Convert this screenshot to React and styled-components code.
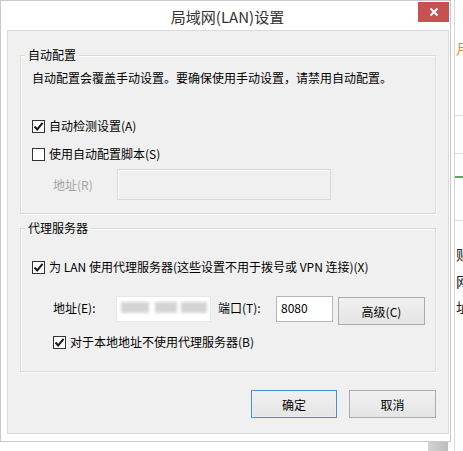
import React from "react";
import styled, { createGlobalStyle } from "styled-components";

const Global = createGlobalStyle`
  html, body { margin: 0; padding: 0; background: #ffffff; }
  body { font-family: "Noto Sans CJK SC", "Microsoft YaHei", sans-serif; font-size: 12px; color: #000; }
  * { box-sizing: border-box; }
`;

const Desktop = styled.div`
  display: flex;
  width: 463px;
  height: 451px;
  overflow: hidden;
  background: #fff;
`;

const LeftCol = styled.div`
  display: flex;
  flex-direction: column;
  width: 451px;
  flex: none;
`;

const Window = styled.div`
  width: 451px;
  height: 442px;
  background: #fff;
  border: 1px solid #c9c9c9;
  display: flex;
  flex-direction: column;
`;

const TitleBar = styled.div`
  position: relative;
  height: 29px;
  display: flex;
  align-items: center;
  justify-content: center;
  font-size: 15px;
  color: #333;
  padding-left: 4px;
  padding-top: 1px;
`;

const CloseBtn = styled.div`
  position: absolute;
  right: 1px;
  top: 1px;
  width: 31px;
  height: 20px;
  background: #c75050;
  display: flex;
  align-items: center;
  justify-content: center;
`;

const Panel = styled.div`
  margin: 0 1px 0 6px;
  height: 404px;
  background: #f0f0f0;
  border: 1px solid #dadada;
  padding: 24px 12px 0 12px;
  display: flex;
  flex-direction: column;
`;

const Group = styled.div`
  border: 1px solid #d9d9d9;
  box-shadow: inset 1px 1px 0 #fbfbfb, 1px 1px 0 #fbfbfb;
  padding: 0 11px ${(p) => p.$pb}px 11px;
  margin-top: ${(p) => p.$mt || 0}px;
  display: flex;
  flex-direction: column;
`;

const Legend = styled.div`
  align-self: flex-start;
  margin: -9px 0 0 -7px;
  padding: 0 3px;
  background: #f0f0f0;
  line-height: 16px;
  height: 16px;
  color: #000;
`;

const Text = styled.div`
  line-height: 16px;
  height: 16px;
  margin-top: ${(p) => p.$mt || 0}px;
  white-space: nowrap;
`;

const CheckRow = styled.label`
  display: flex;
  align-items: center;
  height: 16px;
  line-height: 16px;
  margin-top: ${(p) => p.$mt || 0}px;
  margin-left: ${(p) => p.$ml || 0}px;
  white-space: nowrap;
  gap: 4px;
`;

const Box = styled.span`
  width: 13px;
  height: 13px;
  border: 1px solid #333;
  background: #fff;
  display: inline-flex;
  align-items: center;
  justify-content: center;
  flex: none;
`;

const FieldRow = styled.div`
  display: flex;
  align-items: ${(p) => p.$align || "center"};
  margin-top: ${(p) => p.$mt || 0}px;
  padding-left: 21px;
`;

const Label = styled.span`
  width: ${(p) => p.$w}px;
  flex: none;
  line-height: 16px;
  color: ${(p) => (p.$disabled ? "#a3a3a3" : "#000")};
  margin-top: ${(p) => p.$mt || 0}px;
  margin-left: ${(p) => p.$ml || 0}px;
  white-space: nowrap;
`;

const Input = styled.div`
  width: ${(p) => p.$w}px;
  height: ${(p) => p.$h}px;
  flex: none;
  background: ${(p) => (p.$disabled ? "#f0f0f0" : "#fff")};
  border: 1px solid ${(p) => (p.$disabled ? "#d9d9d9" : p.$faint ? "#e6e6e6" : "#b5b5b5")};
  box-shadow: ${(p) => (p.$disabled ? "inset 1px 1px 0 #fafafa" : "none")};
  display: flex;
  align-items: flex-start;
  padding: 3px 0 0 4px;
  line-height: 16px;
  overflow: hidden;
  margin-left: ${(p) => p.$ml || 0}px;
`;

const Blur = styled.span`
  display: inline-block;
  width: ${(p) => p.$w}px;
  height: 11px;
  margin: 2px ${(p) => p.$gap}px 0 0;
  background: #d4d4d4;
  filter: blur(1.5px);
  flex: none;
`;

const Button = styled.div`
  width: ${(p) => p.$w}px;
  height: ${(p) => p.$h}px;
  flex: none;
  display: flex;
  align-items: center;
  justify-content: center;
  border: 1px solid ${(p) => (p.$default ? "#4a8fd2" : "#acacac")};
  background: linear-gradient(#f0f0f0, #e5e5e5);
  box-shadow: ${(p) => (p.$default ? "inset 0 0 0 1px #e8f1fa" : "none")};
  margin-left: ${(p) => p.$ml || 0}px;
  margin-top: ${(p) => p.$mt || 0}px;
  color: #000;
`;

const ButtonBar = styled.div`
  display: flex;
  justify-content: flex-end;
  gap: 12px;
  margin-top: 18px;
`;

const BottomStrip = styled.div`
  height: 9px;
  display: flex;
  justify-content: flex-end;
  padding-right: 3px;
`;

const GrayBlock = styled.div`
  width: 20px;
  height: 9px;
  background: linear-gradient(90deg, #d2d2d2, #bdbdbd);
`;

const SideApp = styled.div`
  flex: 1;
  margin-left: 3px;
  border-left: 1px solid #d8d8d8;
  display: flex;
  flex-direction: column;
  overflow: hidden;
  white-space: nowrap;
`;

const SideText = styled.div`
  margin-top: ${(p) => p.$mt}px;
  margin-left: 1px;
  line-height: 16px;
  height: 16px;
  font-size: 14px;
  color: ${(p) => p.$color || "#222"};
`;

const SideLine = styled.div`
  margin-top: ${(p) => p.$mt}px;
  height: ${(p) => p.$h || 1}px;
  background: ${(p) => p.$color || "#dcdcdc"};
`;

const Check = () => (
  <svg width="11" height="11" viewBox="0 0 11 11">
    <path d="M1.5 5.5 L4.2 8.4 L9.6 1.8" fill="none" stroke="#1a1a1a" strokeWidth="2" />
  </svg>
);

const CheckBox = ({ checked }) => <Box>{checked && <Check />}</Box>;

export default function App() {
  return (
    <>
      <Global />
      <Desktop>
        <LeftCol>
          <Window>
            <TitleBar>
              局域网(LAN)设置
              <CloseBtn>
                <svg width="10" height="10" viewBox="0 0 10 10">
                  <path d="M1.5 1.5 L8.5 8.5 M8.5 1.5 L1.5 8.5" stroke="#fff" strokeWidth="2" />
                </svg>
              </CloseBtn>
            </TitleBar>
            <Panel>
              <Group $pb={13}>
                <Legend>自动配置</Legend>
                <Text $mt={7}>自动配置会覆盖手动设置。要确保使用手动设置，请禁用自动配置。</Text>
                <CheckRow $mt={32}>
                  <CheckBox checked />
                  自动检测设置(A)
                </CheckRow>
                <CheckRow $mt={12}>
                  <CheckBox />
                  使用自动配置脚本(S)
                </CheckRow>
                <FieldRow $mt={7}>
                  <Label $w={64} $disabled>地址(R)</Label>
                  <Input $w={214} $h={31} $disabled />
                </FieldRow>
              </Group>
              <Group $pb={21} $mt={14}>
                <Legend>代理服务器</Legend>
                <CheckRow $mt={23}>
                  <CheckBox checked />
                  为 LAN 使用代理服务器(这些设置不用于拨号或 VPN 连接)(X)
                </CheckRow>
                <FieldRow $mt={21} $align="flex-start">
                  <Label $w={63} $mt={4}>地址(E):</Label>
                  <Input $w={95} $h={26} $faint>
                    <Blur $w={28} $gap={6} />
                    <Blur $w={22} $gap={4} />
                    <Blur $w={26} $gap={0} />
                  </Input>
                  <Label $w={58} $mt={4} $ml={7}>端口(T):</Label>
                  <Input $w={57} $h={26}>8080</Input>
                  <Button $w={87} $h={28} $mt={1} $ml={5}>高级(C)</Button>
                </FieldRow>
                <CheckRow $mt={9} $ml={21}>
                  <CheckBox checked />
                  对于本地地址不使用代理服务器(B)
                </CheckRow>
              </Group>
              <ButtonBar>
                <Button $w={86} $h={28} $default>确定</Button>
                <Button $w={87} $h={28}>取消</Button>
              </ButtonBar>
            </Panel>
          </Window>
          <BottomStrip>
            <GrayBlock />
          </BottomStrip>
        </LeftCol>
        <SideApp>
          <SideText $mt={40} $color="#e8832a">月</SideText>
          <SideLine $mt={59} />
          <SideLine $mt={37} />
          <SideLine $mt={22} $h={2} $color="#5fa45f" />
          <SideLine $mt={42} />
          <SideText $mt={25}>贴</SideText>
          <SideText $mt={11}>网</SideText>
          <SideText $mt={10}>址</SideText>
        </SideApp>
      </Desktop>
    </>
  );
}
